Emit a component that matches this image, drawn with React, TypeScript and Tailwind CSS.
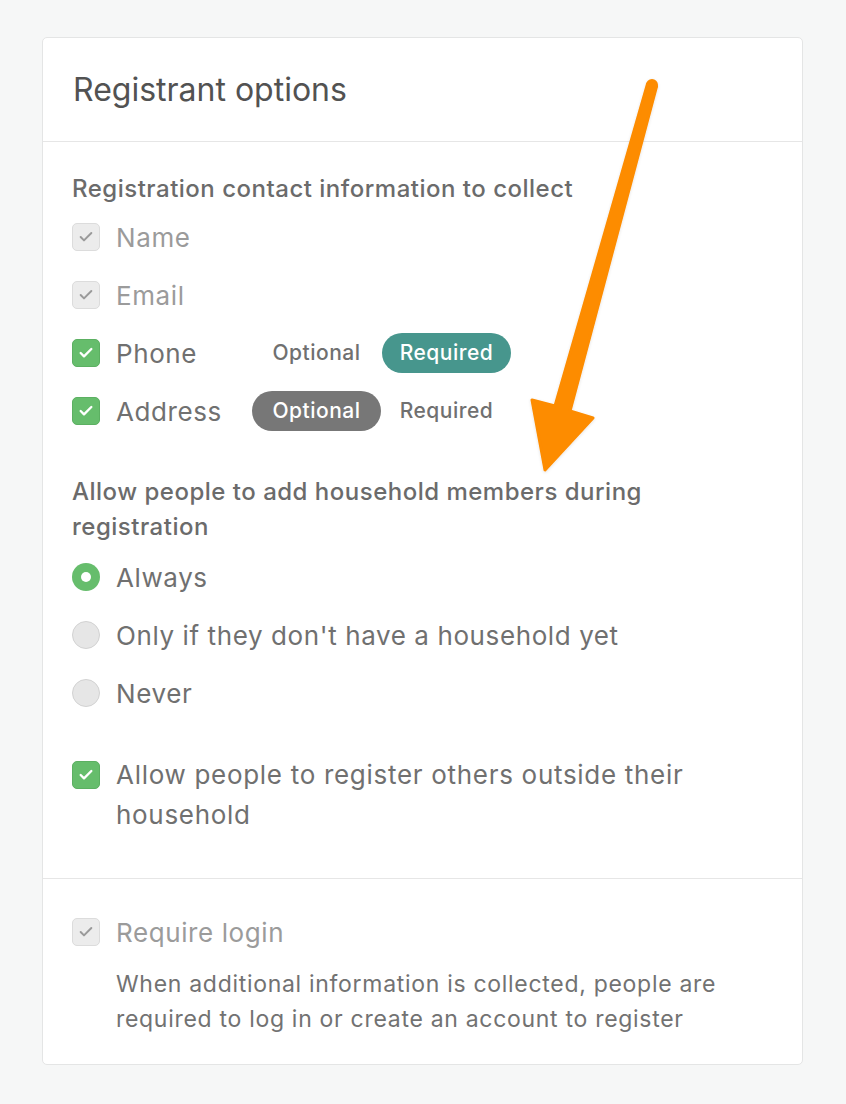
import { Check } from "lucide-react";

type Level = "optional" | "required";

function Box({ checked, disabled }: { checked: boolean; disabled?: boolean }) {
  if (disabled) {
    return (
      <span className="flex h-[28px] w-[28px] shrink-0 items-center justify-center rounded-[5px] border border-[#dcdcdc] bg-[#ececec]">
        <Check className="h-[16px] w-[16px] text-[#9a9a9a]" strokeWidth={3} />
      </span>
    );
  }
  return (
    <span
      className={
        checked
          ? "flex h-[28px] w-[28px] shrink-0 items-center justify-center rounded-[5px] border border-[#5cb062] bg-[#66bd6c]"
          : "flex h-[28px] w-[28px] shrink-0 items-center justify-center rounded-[5px] border border-[#d0d0d0] bg-[#e6e6e6]"
      }
    >
      {checked && <Check className="h-[16px] w-[16px] text-white" strokeWidth={3.5} />}
    </span>
  );
}

function Radio({ selected }: { selected: boolean }) {
  return selected ? (
    <span className="flex h-[28px] w-[28px] shrink-0 items-center justify-center rounded-full bg-[#66bd6c]">
      <span className="h-[10px] w-[10px] rounded-full bg-white" />
    </span>
  ) : (
    <span className="h-[28px] w-[28px] shrink-0 rounded-full border border-[#d2d2d2] bg-[#e6e6e6]" />
  );
}

function LevelToggle({ value }: { value: Level }) {
  return (
    <div className="flex items-center gap-[1px]">
      <span
        className={
          value === "optional"
            ? "flex h-[40px] w-[129px] items-center justify-center rounded-full bg-[#777777] text-[21px] font-medium tracking-[0.5px] text-white"
            : "flex h-[40px] w-[129px] items-center justify-center rounded-full text-[21px] font-medium tracking-[0.5px] text-[#707070]"
        }
      >
        Optional
      </span>
      <span
        className={
          value === "required"
            ? "flex h-[40px] w-[129px] items-center justify-center rounded-full bg-[#47968d] text-[21px] font-medium tracking-[0.5px] text-white"
            : "flex h-[40px] w-[129px] items-center justify-center rounded-full text-[21px] font-medium tracking-[0.5px] text-[#707070]"
        }
      >
        Required
      </span>
    </div>
  );
}

const contactFields: { label: string; locked: boolean; level?: Level }[] = [
  { label: "Name", locked: true },
  { label: "Email", locked: true },
  { label: "Phone", locked: false, level: "required" },
  { label: "Address", locked: false, level: "optional" },
];

const householdOptions = [
  { label: "Always", selected: true },
  { label: "Only if they don't have a household yet", selected: false },
  { label: "Never", selected: false },
];

function Arrow() {
  return (
    <svg
      className="pointer-events-none absolute left-0 top-0"
      width="846"
      height="1104"
      viewBox="0 0 846 1104"
    >
      <defs>
        <filter id="arrowShadow" x="-20%" y="-20%" width="140%" height="140%">
          <feDropShadow dx="0" dy="1" stdDeviation="1.5" floodColor="#000" floodOpacity="0.12" />
        </filter>
      </defs>
      <g filter="url(#arrowShadow)" fill="#fd8c00" stroke="#fd8c00" strokeLinejoin="round" strokeWidth="3">
        <circle cx="652" cy="85" r="4.5" />
        <polygon points="647.5,84 656.5,86.5 570,411 593,418 545,470 532,400 555,406" />
      </g>
    </svg>
  );
}

export default function App() {
  return (
    <div
      className="relative min-h-[1104px] w-full bg-[#f6f7f7] pt-[37px]"
      style={{ fontFamily: "Inter, 'Noto Sans', sans-serif" }}
    >
      <section className="mx-[42px] w-[761px] rounded-[5px] border border-[#e4e5e5] bg-white">
        <div className="flex h-[104px] items-center border-b border-[#e6e6e6] px-[30px]">
          <h2 className="text-[32px] font-normal text-[#525252]">Registrant options</h2>
        </div>

        <div className="border-b border-[#e6e6e6] px-[29px] pb-[43px] pt-[33px]">
          <h3 className="mb-[5px] text-[24px] font-medium leading-[28px] tracking-[0.5px] text-[#6b6b6b]">
            Registration contact information to collect
          </h3>
          <div className="flex flex-col">
            {contactFields.map((field) => (
              <div key={field.label} className="flex h-[58px] items-center">
                <Box checked disabled={field.locked} />
                <span
                  className={
                    field.locked
                      ? "ml-[16px] w-[136px] text-[26px] tracking-[0.6px] text-[#9b9b9b]"
                      : "ml-[16px] w-[136px] text-[26px] tracking-[0.6px] text-[#707070]"
                  }
                >
                  {field.label}
                </span>
                {field.level && <LevelToggle value={field.level} />}
              </div>
            ))}
          </div>

          <h3 className="mt-[34px] text-[24px] font-medium leading-[35px] tracking-[0.5px] text-[#6b6b6b]">
            Allow people to add household members during registration
          </h3>
          <div className="mt-[4px] flex flex-col">
            {householdOptions.map((opt) => (
              <div key={opt.label} className="flex h-[58px] items-center">
                <Radio selected={opt.selected} />
                <span className="ml-[16px] text-[26px] tracking-[0.6px] text-[#707070]">{opt.label}</span>
              </div>
            ))}
          </div>

          <div className="mt-[33px] flex items-start">
            <span className="mt-[6px]">
              <Box checked />
            </span>
            <span className="ml-[16px] text-[26px] leading-[40px] tracking-[0.7px] text-[#707070]">
              Allow people to register others outside their household
            </span>
          </div>
        </div>

        <div className="px-[29px] pb-[27px] pt-[24px]">
          <div className="flex h-[58px] items-center">
            <Box checked disabled />
            <span className="ml-[16px] text-[26px] tracking-[0.6px] text-[#9b9b9b]">Require login</span>
          </div>
          <p className="ml-[44px] mt-[6px] text-[23px] leading-[35px] tracking-[0.7px] text-[#727272]">
            When additional information is collected, people are required to log in or create an
            account to register
          </p>
        </div>
      </section>
      <Arrow />
    </div>
  );
}
